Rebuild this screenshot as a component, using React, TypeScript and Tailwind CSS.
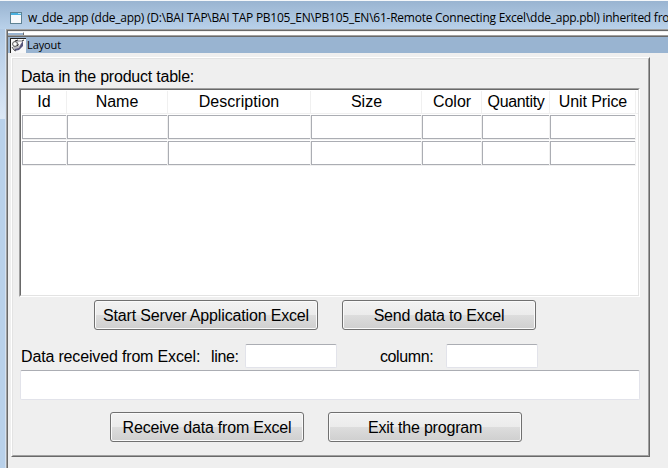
import type { ReactNode } from 'react';

const columns = [
  { label: 'Id', cls: 'w-[45px]', text: '' },
  { label: 'Name', cls: 'w-[101px]', text: '' },
  { label: 'Description', cls: 'w-[143px]', text: 'tracking-[0.05px]' },
  { label: 'Size', cls: 'w-[111px]', text: 'pl-px' },
  { label: 'Color', cls: 'w-[60px]', text: 'pl-px' },
  { label: 'Quantity', cls: 'w-[68px]', text: 'pl-px tracking-[-0.35px]' },
  { label: 'Unit Price', cls: 'w-[86px]', text: 'pl-px tracking-[-0.1px]' },
];

function Button({ children, className }: { children: ReactNode; className: string }) {
  return (
    <button
      className={`flex h-[30px] items-center justify-center whitespace-nowrap rounded-[3px] border border-[#707070] bg-[linear-gradient(#f2f2f2,#ebebeb_50%,#dddddd_50%,#cfcfcf)] pt-px shadow-[inset_0_0_0_1px_#fafafa] ${className}`}
    >
      {children}
    </button>
  );
}

function Field({ className }: { className: string }) {
  return (
    <input
      readOnly
      className={`block rounded-[2px] border border-[#e2e3ea] border-t-[#abadb3] bg-white outline-none ${className}`}
    />
  );
}

function DataTable() {
  return (
    <div className="ml-[7px] h-[209px] w-[621px] border border-t-[#a0a0a0] border-r-white border-b-white border-l-[#a0a0a0]">
      <div className="h-full border border-t-[#696969] border-r-[#e3e3e3] border-b-[#e3e3e3] border-l-[#696969] bg-white pt-px pl-px">
        <div className="flex h-[23px] border-b border-[#f0f0f0]">
          {columns.map((c) => (
            <div key={c.label} className={`flex justify-center border-r border-[#f0f0f0] leading-[21px] ${c.cls}`}>
              <span className={`whitespace-nowrap ${c.text}`}>{c.label}</span>
            </div>
          ))}
        </div>
        {[0, 1].map((row) => (
          <div key={row} className="flex h-[26px] pt-px">
            {columns.map((c) => (
              <div key={c.label} className={`h-[25px] border-r border-b border-[#f0f0f0] ${c.cls}`}>
                <div className="h-6 border border-r-0 border-[#abadb3]" />
              </div>
            ))}
          </div>
        ))}
      </div>
    </div>
  );
}

function WindowIcon() {
  return (
    <svg className="shrink-0" width="12" height="12" viewBox="0 0 12 12" shapeRendering="crispEdges">
      <rect width="12" height="12" fill="#5e8294" />
      <rect x="1" y="1" width="10" height="2" fill="#4ab0e0" />
      <rect x="1" y="3" width="10" height="8" fill="#f7f9fc" />
      <rect x="8" y="1" width="3" height="1" fill="#b8e4f5" />
    </svg>
  );
}

function LayoutIcon() {
  return (
    <svg width="16" height="15" viewBox="0 0 16 15">
      <rect width="16" height="15" fill="#f8f8f8" />
      <path d="M0 .5h16M.5 0v15" stroke="#222" fill="none" />
      <path d="M4 3l4-1 5 0v5l-3 4-5 1-2-3z" fill="#bcbcc0" />
      <circle cx="5" cy="6" r="2.4" fill="#fff" stroke="#555" strokeWidth="1" />
      <path d="M5 3l3-1M12 3l2-1M7 8l3-3" stroke="#333" fill="none" />
      <path d="M8 4h4l-3 4z" fill="#fff" />
      <path d="M13 3v5l-4 4-5 1 1-2 4-1 2-4z" fill="#55557c" />
      <path d="M2 9l2 3 2 1" stroke="#555" fill="none" />
    </svg>
  );
}

export default function App() {
  return (
    <div className="flex h-[468px] w-[668px] flex-col overflow-hidden bg-[#b9d1ea] font-['Liberation_Sans',Arial,sans-serif] text-[16px] tracking-[-0.2px] text-black">
      <header className="flex h-[29px] shrink-0 items-center border-t border-[#f4f7fa] bg-linear-to-b from-[#99b4d1] to-[#b9d1ea] pt-[5px] pl-[10px]">
        <WindowIcon />
        <span className="ml-[6px] whitespace-pre font-['Open_Sans','Noto_Sans',sans-serif] text-[12px] leading-4 tracking-[-0.245px]">
          w_dde_app (dde_app) (D:\BAI TAP\BAI TAP PB105_EN\PB105_EN\61-Remote Connecting Excel\dde_app.pbl) inherited fro
        </span>
      </header>
      <div className="flex min-h-0 flex-1">
        <div className="flex w-1.5 shrink-0 flex-col border-r border-[#d4e2f2]">
          <div className="h-[90px] bg-linear-to-b from-[#b0c9e4] to-[#dce8f6]" />
          <div className="flex-1 bg-[#b9d1ea]" />
        </div>
        <div className="flex flex-1 flex-col border-t border-l border-[#a0a0a0]">
          <div className="flex flex-1 flex-col border-t border-l border-[#696969] bg-[#efefef]">
            <div className="flex h-[5px] shrink-0 flex-col bg-[#efefef] pt-px">
              <div className="h-[3px] bg-white">
                <div className="h-[3px] w-4 border-t border-r border-t-white border-r-[#696969] bg-[#99b4d1]" />
              </div>
              <div className="h-px bg-[#a0a0a0]" />
            </div>
            <div className="flex h-[17px] shrink-0 border-t border-[#696969] bg-[#99b4d1] pl-0.5">
              <div className="mt-px">
                <LayoutIcon />
              </div>
              <span className="ml-px font-['Open_Sans','Noto_Sans',sans-serif] text-[11px] leading-4 tracking-[-0.1px]">Layout</span>
            </div>
            <div className="mt-1 ml-[3px] h-[400px] w-[639px] border border-t-white border-r-[#696969] border-b-[#696969] border-l-white">
              <div className="h-full border border-t-[#e3e3e3] border-r-[#a0a0a0] border-b-[#a0a0a0] border-l-[#e3e3e3]">
                <div className="h-[29px] pt-[9px] pl-[8px] leading-[18px] tracking-[-0.22px]">Data in the product table:</div>
                <div className="-ml-px tracking-normal">
                  <DataTable />
                </div>
                <div className="mt-[3px] flex gap-6 pl-[81px]">
                  <Button className="w-[224px] tracking-[-0.16px]">Start Server Application Excel</Button>
                  <Button className="w-[194px]">Send data to Excel</Button>
                </div>
                <div className="mt-[14px] flex h-6 pl-[8px] leading-[25px]">
                  <span className="w-[190px] whitespace-nowrap tracking-[-0.16px]">Data received from Excel:</span>
                  <span className="w-[34px] tracking-[-0.35px]">line:</span>
                  <Field className="h-6 w-[92px]" />
                  <span className="ml-[43px] w-[66px] tracking-[-0.4px]">column:</span>
                  <Field className="h-6 w-[92px]" />
                </div>
                <Field className="mt-0.5 ml-[7px] h-[30px] w-[620px]" />
                <div className="mt-3 flex gap-6 pl-[97px]">
                  <Button className="w-[194px]">Receive data from Excel</Button>
                  <Button className="w-[194px]">Exit the program</Button>
                </div>
              </div>
            </div>
          </div>
        </div>
      </div>
    </div>
  );
}
